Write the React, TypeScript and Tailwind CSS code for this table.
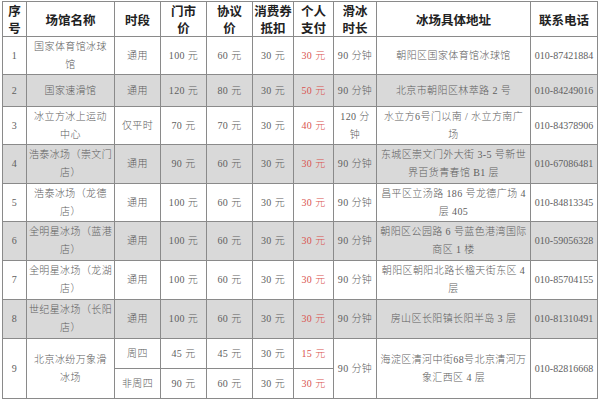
import React from 'react'

type Row = {
  no: string
  name: React.ReactNode
  time: string
  door: string
  deal: string
  coupon: string
  pay: string
  dur: React.ReactNode
  addr: React.ReactNode
  phone: string
  gray?: boolean
  h: string
}

const rows: Row[] = [
  { no: '1', name: <>国家体育馆冰球<br />馆</>, time: '通用', door: '100 元', deal: '60 元', coupon: '30 元', pay: '30 元', dur: '90 分钟', addr: '朝阳区国家体育馆冰球馆', phone: '010-87421884', h: 'h-[38px]' },
  { no: '2', name: '国家速滑馆', time: '通用', door: '120 元', deal: '80 元', coupon: '30 元', pay: '50 元', dur: '90 分钟', addr: '北京市朝阳区林萃路 2 号', phone: '010-84249016', gray: true, h: 'h-[32px]' },
  { no: '3', name: <>冰立方冰上运动<br />中心</>, time: '仅平时', door: '70 元', deal: '70 元', coupon: '30 元', pay: '40 元', dur: <>120 分<br />钟</>, addr: <>水立方6号门以南 / 水立方南广<br />场</>, phone: '010-84378906', h: 'h-[38px]' },
  { no: '4', name: <>浩泰冰场（崇文门<br />店）</>, time: '通用', door: '90 元', deal: '60 元', coupon: '30 元', pay: '30 元', dur: '90 分钟', addr: <>东城区崇文门外大街 3-5 号新世<br />界百货青春馆 B1 层</>, phone: '010-67086481', gray: true, h: 'h-[39px]' },
  { no: '5', name: <>浩泰冰场（龙德<br />店）</>, time: '通用', door: '100 元', deal: '60 元', coupon: '30 元', pay: '30 元', dur: '90 分钟', addr: <>昌平区立汤路 186 号龙德广场 4<br />层 405</>, phone: '010-84813345', h: 'h-[38px]' },
  { no: '6', name: <>全明星冰场（蓝港<br />店）</>, time: '通用', door: '100 元', deal: '60 元', coupon: '30 元', pay: '30 元', dur: '90 分钟', addr: <>朝阳区公园路 6 号蓝色港湾国际<br />商区 1 楼</>, phone: '010-59056328', gray: true, h: 'h-[39px]' },
  { no: '7', name: <>全明星冰场（龙湖<br />店）</>, time: '通用', door: '100 元', deal: '60 元', coupon: '30 元', pay: '30 元', dur: '90 分钟', addr: <>朝阳区朝阳北路长楹天街东区 4<br />层</>, phone: '010-85704155', h: 'h-[39px]' },
  { no: '8', name: <>世纪星冰场（长阳<br />店）</>, time: '通用', door: '100 元', deal: '60 元', coupon: '30 元', pay: '30 元', dur: '90 分钟', addr: '房山区长阳镇长阳半岛 3 层', phone: '010-81310491', gray: true, h: 'h-[39px]' },
]

const td = 'border border-[#8a8a8a] text-center align-middle p-0'
const th = 'border border-[#8a8a8a] text-center align-middle p-0 font-bold text-[12.5px] leading-[17px] tracking-normal whitespace-nowrap text-[#222]'
const red = 'text-[#d9534f]'

export default function App() {
  return (
    <div className="w-[600px] h-[400px] bg-white pt-px pl-[2px] overflow-hidden">
      <table
        className="table-fixed border-collapse w-[595px] text-[10px] leading-[18px] font-light text-[#606060] tracking-[0.4px]"
        style={{ fontFamily: '"Liberation Serif", "Noto Sans CJK SC", serif' }}
      >
        <colgroup>
          <col className="w-[24px]" />
          <col className="w-[88px]" />
          <col className="w-[46px]" />
          <col className="w-[46px]" />
          <col className="w-[46px]" />
          <col className="w-[41px]" />
          <col className="w-[40px]" />
          <col className="w-[43px]" />
          <col className="w-[154px]" />
          <col className="w-[67px]" />
        </colgroup>
        <thead style={{ fontFamily: '"Noto Sans CJK SC", sans-serif' }}>
          <tr className="h-[35px]">
            <th className={th}>序<br />号</th>
            <th className={th}>场馆名称</th>
            <th className={th}>时段</th>
            <th className={th}>门市<br />价</th>
            <th className={th}>协议<br />价</th>
            <th className={th}>消费券<br />抵扣</th>
            <th className={th}>个人<br />支付</th>
            <th className={th}>滑冰<br />时长</th>
            <th className={th}>冰场具体地址</th>
            <th className={th}>联系电话</th>
          </tr>
        </thead>
        <tbody>
          {rows.map((r) => (
            <tr key={r.no} className={`${r.h} ${r.gray ? 'bg-[#d9d9d9]' : ''}`}>
              <td className={td}>{r.no}</td>
              <td className={td}>{r.name}</td>
              <td className={td}>{r.time}</td>
              <td className={td}>{r.door}</td>
              <td className={td}>{r.deal}</td>
              <td className={td}>{r.coupon}</td>
              <td className={`${td} ${red}`}>{r.pay}</td>
              <td className={td}>{r.dur}</td>
              <td className={td}>{r.addr}</td>
              <td className={`${td} tracking-normal`}>{r.phone}</td>
            </tr>
          ))}
          <tr className="h-[30px]">
            <td className={td} rowSpan={2}>9</td>
            <td className={td} rowSpan={2}>北京冰纷万象滑<br />冰场</td>
            <td className={td}>周四</td>
            <td className={td}>45 元</td>
            <td className={td}>45 元</td>
            <td className={td}>30 元</td>
            <td className={`${td} ${red}`}>15 元</td>
            <td className={td} rowSpan={2}>90 分钟</td>
            <td className={td} rowSpan={2}>海淀区清河中街68号北京清河万<br />象汇西区 4 层</td>
            <td className={`${td} tracking-normal`} rowSpan={2}>010-82816668</td>
          </tr>
          <tr className="h-[30px]">
            <td className={td}>非周四</td>
            <td className={td}>90 元</td>
            <td className={td}>60 元</td>
            <td className={td}>30 元</td>
            <td className={`${td} ${red}`}>30 元</td>
          </tr>
        </tbody>
      </table>
    </div>
  )
}
